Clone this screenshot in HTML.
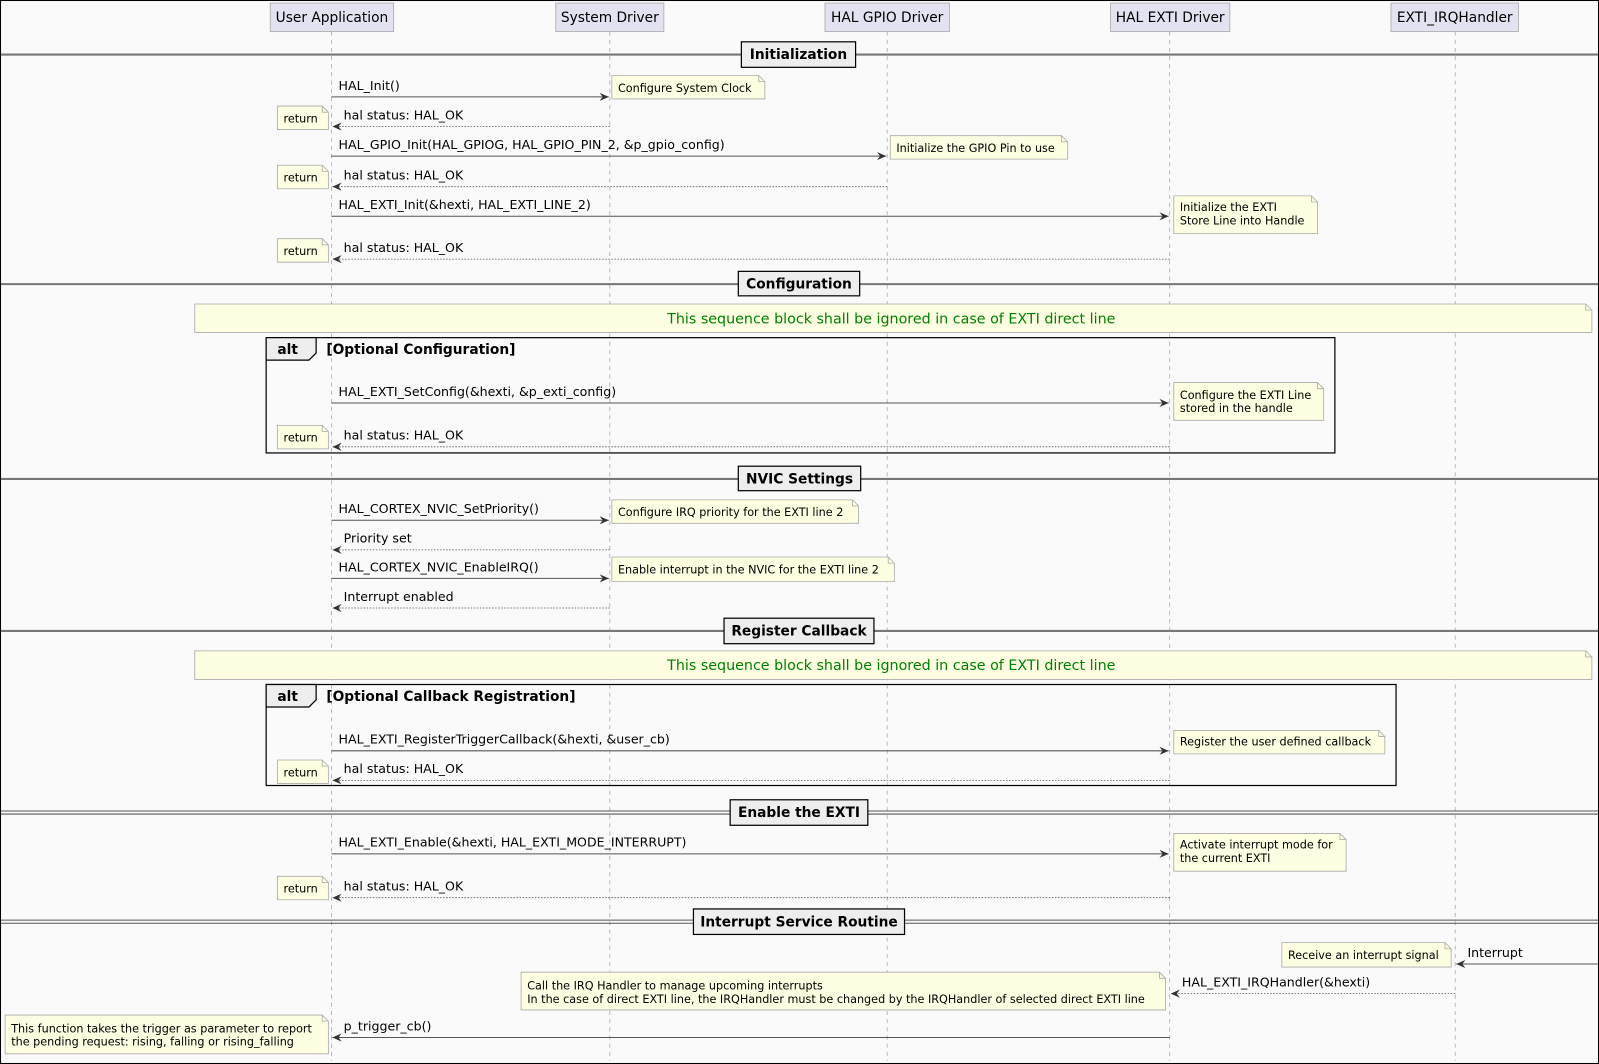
<!DOCTYPE html>
<html><head><meta charset="utf-8"><style>
html,body{margin:0;padding:0;background:#fff}
svg{display:block}
text{font-family:"DejaVu Sans","Liberation Sans",sans-serif}
.p{font-size:13.5px;fill:#000}
.m{font-size:12.35px;fill:#000}
.n{font-size:11px;fill:#000}
.d{font-size:13.5px;font-weight:bold;fill:#000}
.ll{stroke:#aaa;stroke-width:0.8;stroke-dasharray:4 4}
.s{stroke:#555;stroke-width:1}
.r{stroke:#555;stroke-width:0.8;stroke-dasharray:1.5 1.5}
.note{fill:#fefee2;stroke:#aaa;stroke-width:0.8}
.pb{fill:#e2e2f0;stroke:#aaa;stroke-width:0.8}
</style></head><body>
<svg width="1599" height="1064" viewBox="0 0 1568 1043" preserveAspectRatio="none" xmlns="http://www.w3.org/2000/svg">
<defs>
<marker id="a" markerWidth="10" markerHeight="8" refX="9" refY="4" orient="auto" markerUnits="userSpaceOnUse"><path d="M0,0 L9,4 L0,8 L3,4 Z" fill="#333"/></marker>
</defs>
<rect x="0.5" y="0.5" width="1567" height="1042" fill="#fafafa" stroke="#000" stroke-width="1"/>
<line class="ll" x1="325" y1="31" x2="325" y2="1040"/>
<line class="ll" x1="598" y1="31" x2="598" y2="1040"/>
<line class="ll" x1="870" y1="31" x2="870" y2="1040"/>
<line class="ll" x1="1147" y1="31" x2="1147" y2="1040"/>
<line class="ll" x1="1427" y1="31" x2="1427" y2="1040"/>
<rect class="pb" x="265" y="3" width="121" height="28"/><text class="p" x="325.5" y="21.5" text-anchor="middle">User Application</text>
<rect class="pb" x="545" y="3" width="106" height="28"/><text class="p" x="598" y="21.5" text-anchor="middle">System Driver</text>
<rect class="pb" x="809" y="3" width="122" height="28"/><text class="p" x="870" y="21.5" text-anchor="middle">HAL GPIO Driver</text>
<rect class="pb" x="1089" y="3" width="117" height="28"/><text class="p" x="1147.5" y="21.5" text-anchor="middle">HAL EXTI Driver</text>
<rect class="pb" x="1364" y="3" width="125" height="28"/><text class="p" x="1426.5" y="21.5" text-anchor="middle">EXTI_IRQHandler</text>

<g stroke="#777" stroke-width="2">
<line x1="1" y1="53.5" x2="1567" y2="53.5"/>
<line x1="1" y1="278.5" x2="1567" y2="278.5"/>
<line x1="1" y1="469.5" x2="1567" y2="469.5"/>
<line x1="1" y1="618.5" x2="1567" y2="618.5"/>
</g>
<g stroke="#555" stroke-width="1">
<line x1="1" y1="795" x2="1567" y2="795"/><line x1="1" y1="798" x2="1567" y2="798"/>
<line x1="1" y1="902" x2="1567" y2="902"/><line x1="1" y1="905" x2="1567" y2="905"/>
</g>
<g fill="#eee" stroke="#000" stroke-width="1.2">
<rect x="727" y="41" width="112" height="25"/>
<rect x="724" y="266" width="119" height="24"/>
<rect x="724" y="457" width="120" height="24"/>
<rect x="710" y="606" width="147" height="25"/>
<rect x="716" y="784" width="135" height="25"/>
<rect x="680" y="891" width="207" height="25"/>
</g>
<text class="d" x="783" y="58" text-anchor="middle">Initialization</text>
<text class="d" x="783.5" y="283" text-anchor="middle">Configuration</text>
<text class="d" x="784" y="474" text-anchor="middle">NVIC Settings</text>
<text class="d" x="783.5" y="623" text-anchor="middle">Register Callback</text>
<text class="d" x="783.5" y="801" text-anchor="middle">Enable the EXTI</text>
<text class="d" x="783.5" y="908" text-anchor="middle">Interrupt Service Routine</text>

<path class="note" d="M191,298 H1555 L1561,304 V326 H191 Z"/><path d="M1555,298 V304 H1561" fill="none" stroke="#aaa" stroke-width="0.8"/>
<text x="874" y="317" text-anchor="middle" font-size="14" fill="#008000">This sequence block shall be ignored in case of EXTI direct line</text>
<path class="note" d="M191,638 H1555 L1561,644 V666 H191 Z"/><path d="M1555,638 V644 H1561" fill="none" stroke="#aaa" stroke-width="0.8"/>
<text x="874" y="657" text-anchor="middle" font-size="14" fill="#008000">This sequence block shall be ignored in case of EXTI direct line</text>

<rect x="261" y="331" width="1048" height="113" fill="none" stroke="#000" stroke-width="1.2"/>
<path d="M261,331 H310 V346 L303,353 H261 Z" fill="#eee" stroke="#000" stroke-width="1.2"/>
<text class="d" x="272" y="347">alt</text><text class="d" x="320" y="347">[Optional Configuration]</text>
<rect x="261" y="671" width="1108" height="99" fill="none" stroke="#000" stroke-width="1.2"/>
<path d="M261,671 H310 V686 L303,693 H261 Z" fill="#eee" stroke="#000" stroke-width="1.2"/>
<text class="d" x="272" y="687">alt</text><text class="d" x="320" y="687">[Optional Callback Registration]</text>

<g fill="none">
<line class="s" x1="325" y1="95" x2="597" y2="95" marker-end="url(#a)"/>
<line class="r" x1="598" y1="124" x2="326" y2="124" marker-end="url(#a)"/>
<line class="s" x1="325" y1="153" x2="869" y2="153" marker-end="url(#a)"/>
<line class="r" x1="870" y1="183" x2="326" y2="183" marker-end="url(#a)"/>
<line class="s" x1="325" y1="212" x2="1146" y2="212" marker-end="url(#a)"/>
<line class="r" x1="1147" y1="254" x2="326" y2="254" marker-end="url(#a)"/>
<line class="s" x1="325" y1="395" x2="1146" y2="395" marker-end="url(#a)"/>
<line class="r" x1="1147" y1="438" x2="326" y2="438" marker-end="url(#a)"/>
<line class="s" x1="325" y1="510" x2="597" y2="510" marker-end="url(#a)"/>
<line class="r" x1="598" y1="539" x2="326" y2="539" marker-end="url(#a)"/>
<line class="s" x1="325" y1="567" x2="597" y2="567" marker-end="url(#a)"/>
<line class="r" x1="598" y1="596" x2="326" y2="596" marker-end="url(#a)"/>
<line class="s" x1="325" y1="736" x2="1146" y2="736" marker-end="url(#a)"/>
<line class="r" x1="1147" y1="765" x2="326" y2="765" marker-end="url(#a)"/>
<line class="s" x1="325" y1="837" x2="1146" y2="837" marker-end="url(#a)"/>
<line class="r" x1="1147" y1="880" x2="326" y2="880" marker-end="url(#a)"/>
<line class="s" x1="1567" y1="945" x2="1428" y2="945" marker-end="url(#a)"/>
<line class="r" x1="1427" y1="974" x2="1148" y2="974" marker-end="url(#a)"/>
<line class="s" x1="1147" y1="1017" x2="326" y2="1017" marker-end="url(#a)"/>
</g>
<text class="m" x="332" y="88">HAL_Init()</text>
<text class="m" x="337" y="117">hal status: HAL_OK</text>
<text class="m" x="332" y="146">HAL_GPIO_Init(HAL_GPIOG, HAL_GPIO_PIN_2, &amp;p_gpio_config)</text>
<text class="m" x="337" y="176">hal status: HAL_OK</text>
<text class="m" x="332" y="205">HAL_EXTI_Init(&amp;hexti, HAL_EXTI_LINE_2)</text>
<text class="m" x="337" y="247">hal status: HAL_OK</text>
<text class="m" x="332" y="388">HAL_EXTI_SetConfig(&amp;hexti, &amp;p_exti_config)</text>
<text class="m" x="337" y="431">hal status: HAL_OK</text>
<text class="m" x="332" y="503">HAL_CORTEX_NVIC_SetPriority()</text>
<text class="m" x="337" y="532">Priority set</text>
<text class="m" x="332" y="560">HAL_CORTEX_NVIC_EnableIRQ()</text>
<text class="m" x="337" y="589">Interrupt enabled</text>
<text class="m" x="332" y="729">HAL_EXTI_RegisterTriggerCallback(&amp;hexti, &amp;user_cb)</text>
<text class="m" x="337" y="758">hal status: HAL_OK</text>
<text class="m" x="332" y="830">HAL_EXTI_Enable(&amp;hexti, HAL_EXTI_MODE_INTERRUPT)</text>
<text class="m" x="337" y="873">hal status: HAL_OK</text>
<text class="m" x="1439" y="938">Interrupt</text>
<text class="m" x="1159" y="967">HAL_EXTI_IRQHandler(&amp;hexti)</text>
<text class="m" x="337" y="1010">p_trigger_cb()</text>

<g>
<path class="note" d="M600,74 H744 L750,80 V97 H600 Z"/><path d="M744,74 V80 H750" fill="none" stroke="#aaa" stroke-width="0.8"/>
<text class="n" x="606" y="90">Configure System Clock</text>

<path class="note" d="M873,133 H1041 L1047,139 V156 H873 Z"/><path d="M1041,133 V139 H1047" fill="none" stroke="#aaa" stroke-width="0.8"/>
<text class="n" x="879" y="149">Initialize the GPIO Pin to use</text>

<path class="note" d="M1151,192 H1286 L1292,198 V229 H1151 Z"/><path d="M1286,192 V198 H1292" fill="none" stroke="#aaa" stroke-width="0.8"/>
<text class="n" x="1157" y="207">Initialize the EXTI</text><text class="n" x="1157" y="220">Store Line into Handle</text>

<path class="note" d="M1151,375 H1292 L1298,381 V412 H1151 Z"/><path d="M1292,375 V381 H1298" fill="none" stroke="#aaa" stroke-width="0.8"/>
<text class="n" x="1157" y="391">Configure the EXTI Line</text><text class="n" x="1157" y="404">stored in the handle</text>

<path class="note" d="M600,490 H836 L842,496 V513 H600 Z"/><path d="M836,490 V496 H842" fill="none" stroke="#aaa" stroke-width="0.8"/>
<text class="n" x="606" y="506">Configure IRQ priority for the EXTI line 2</text>

<path class="note" d="M600,546 H871 L877,552 V570 H600 Z"/><path d="M871,546 V552 H877" fill="none" stroke="#aaa" stroke-width="0.8"/>
<text class="n" x="606" y="562">Enable interrupt in the NVIC for the EXTI line 2</text>

<path class="note" d="M1151,716 H1352 L1358,722 V739 H1151 Z"/><path d="M1352,716 V722 H1358" fill="none" stroke="#aaa" stroke-width="0.8"/>
<text class="n" x="1157" y="731">Register the user defined callback</text>

<path class="note" d="M1151,817 H1314 L1320,823 V854 H1151 Z"/><path d="M1314,817 V823 H1320" fill="none" stroke="#aaa" stroke-width="0.8"/>
<text class="n" x="1157" y="832">Activate interrupt mode for</text><text class="n" x="1157" y="845">the current EXTI</text>

<path class="note" d="M1257,924 H1417 L1423,930 V948 H1257 Z"/><path d="M1417,924 V930 H1423" fill="none" stroke="#aaa" stroke-width="0.8"/>
<text class="n" x="1263" y="940">Receive an interrupt signal</text>

<path class="note" d="M511,953 H1137 L1143,959 V990 H511 Z"/><path d="M1137,953 V959 H1143" fill="none" stroke="#aaa" stroke-width="0.8"/>
<text class="n" x="517" y="970">Call the IRQ Handler to manage upcoming interrupts</text>
<text class="n" x="517" y="983">In the case of direct EXTI line, the IRQHandler must be changed by the IRQHandler of selected direct EXTI line</text>

<path class="note" d="M5,995 H316 L322,1001 V1033 H5 Z"/><path d="M316,995 V1001 H322" fill="none" stroke="#aaa" stroke-width="0.8"/>
<text class="n" x="11" y="1012">This function takes the trigger as parameter to report</text>
<text class="n" x="11" y="1025">the pending request: rising, falling or rising_falling</text>

<g id="ret">
<path class="note" d="M272,104 H316 L322,110 V127 H272 Z"/><path d="M316,104 V110 H322" fill="none" stroke="#aaa" stroke-width="0.8"/>
<text class="n" x="278" y="120">return</text>
</g>
<use href="#ret" y="58"/>
<use href="#ret" y="130"/>
<use href="#ret" y="313"/>
<use href="#ret" y="641"/>
<use href="#ret" y="755"/>
</g>
</svg>
</body></html>
